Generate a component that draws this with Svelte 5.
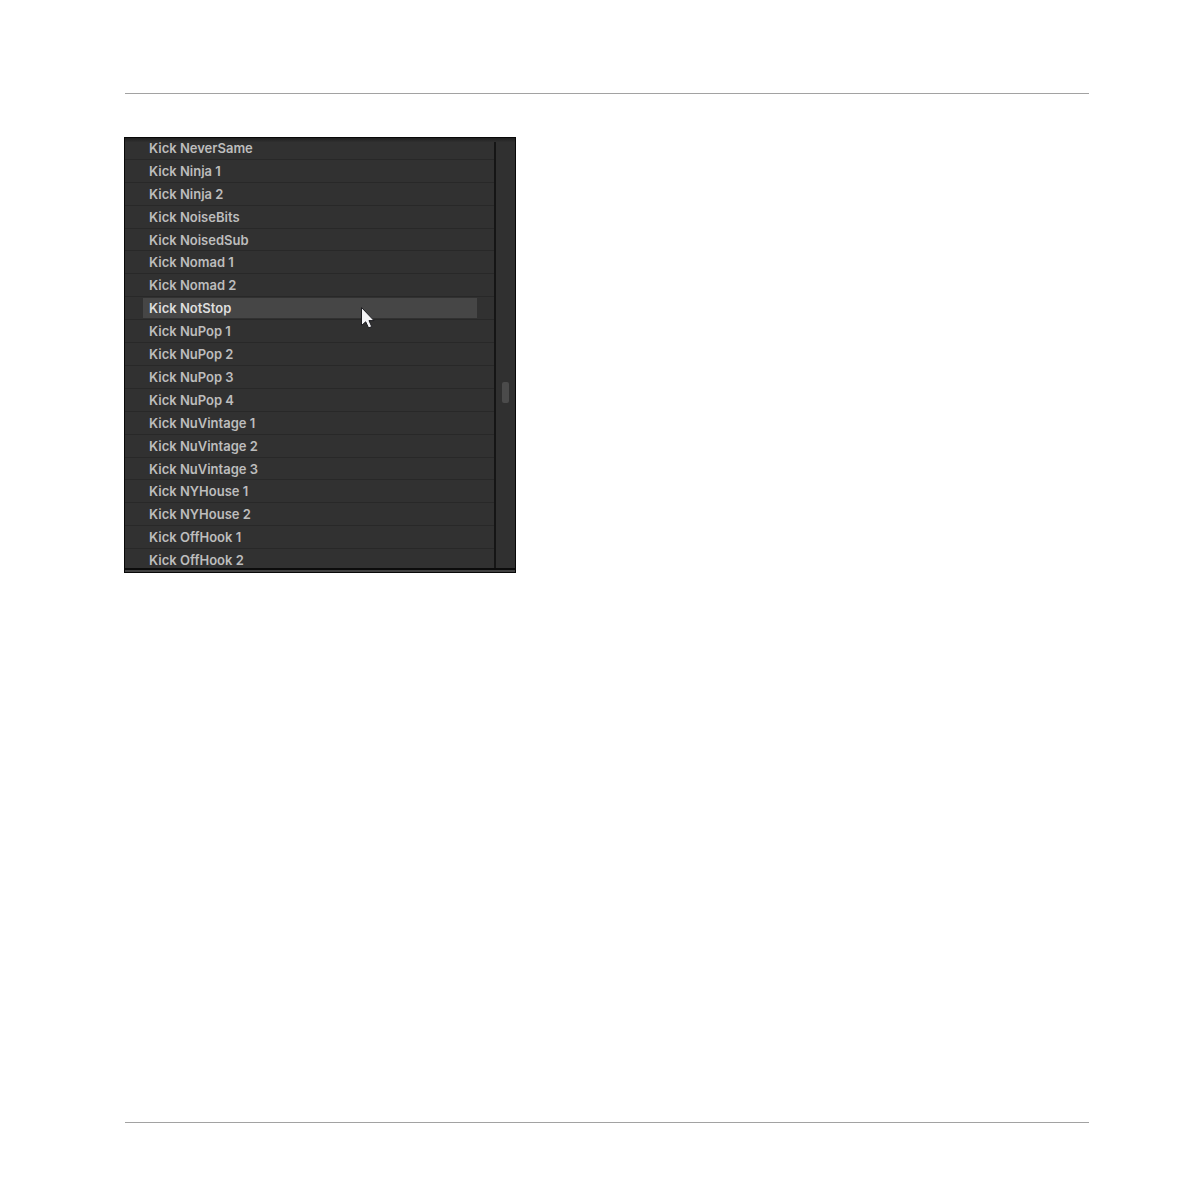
<script lang="ts">
  const samples = [
    'Kick NeverSame',
    'Kick Ninja 1',
    'Kick Ninja 2',
    'Kick NoiseBits',
    'Kick NoisedSub',
    'Kick Nomad 1',
    'Kick Nomad 2',
    'Kick NotStop',
    'Kick NuPop 1',
    'Kick NuPop 2',
    'Kick NuPop 3',
    'Kick NuPop 4',
    'Kick NuVintage 1',
    'Kick NuVintage 2',
    'Kick NuVintage 3',
    'Kick NYHouse 1',
    'Kick NYHouse 2',
    'Kick OffHook 1',
    'Kick OffHook 2'
  ];

  let selected = $state('Kick NotStop');
</script>

<div class="page">
  <hr />
  <main>
    <div class="browser">
      <ul class="samples">
        {#each samples as sample (sample)}
          <li>
            <button class:selected={sample === selected} onclick={() => (selected = sample)}>
              {sample}
            </button>
          </li>
        {/each}
      </ul>
      <div class="scrollbar">
        <div class="thumb"></div>
      </div>
      <div class="edge"></div>
      <svg class="cursor" width="15" height="24" viewBox="0 0 15 24">
        <path
          d="M1.5 1.5V19.5L5.7 15.8L8.6 22L11.7 20.6L9 14.6H14Z"
          fill="#f4f4f6"
          stroke="#1c1c20"
          stroke-width="1"
        />
      </svg>
    </div>
  </main>
  <hr />
</div>

<style>
  :global(body) {
    margin: 0;
    background: #fff;
  }

  .page {
    box-sizing: border-box;
    display: flex;
    flex-direction: column;
    min-height: 100vh;
    padding: 93px 102px 68px 125px;
    font-family: Inter, 'Liberation Sans', sans-serif;
  }

  hr {
    width: 100%;
    height: 1px;
    margin: 0;
    border: 0;
    background: #a2a2a2;
  }

  main {
    flex: 1;
    padding-top: 43px;
  }

  .browser {
    position: relative;
    box-sizing: border-box;
    display: grid;
    grid-template-rows: 100%;
    grid-template-columns: 1fr 19px;
    width: 392px;
    height: 436px;
    margin-left: -1px;
    border: 1px solid #080808;
    border-top: 0;
    background: #313131;
    overflow: hidden;
  }

  .samples {
    display: grid;
    grid-template-rows: repeat(19, minmax(0, 1fr));
    margin: 0;
    padding: 0;
    border-right: 2px solid #151515;
    list-style: none;
  }

  li {
    box-sizing: border-box;
    padding: 1px 17px 1px 18px;
    border-bottom: 1px solid #282828;
  }

  button {
    display: block;
    width: 100%;
    height: 20px;
    padding: 0 6px;
    border: 0;
    background: none;
    color: #bdbdbd;
    font-family: inherit;
    font-size: 13px;
    font-weight: 600;
    line-height: 20px;
    text-align: left;
  }

  button.selected {
    background: #464646;
    color: #dedede;
  }

  .scrollbar {
    display: flex;
    justify-content: center;
    align-items: flex-start;
    padding-top: 245px;
    background: #303030;
  }

  .thumb {
    width: 7px;
    height: 21px;
    border-radius: 2px;
    background: #4b4b4b;
  }

  /* bottom frame of the list, drawn over the last row */
  .edge {
    position: absolute;
    right: 0;
    bottom: 0;
    left: 0;
    height: 2px;
    border-top: 2px solid #0c0c0c;
    background: #414141;
  }

  .browser::before {
    content: '';
    position: absolute;
    top: 0;
    right: 0;
    left: 0;
    height: 4px;
    border-top: 1px solid #080808;
    background: linear-gradient(#202020, #2f2f2f);
  }

  .cursor {
    position: absolute;
    top: 169px;
    left: 235px;
  }
</style>
